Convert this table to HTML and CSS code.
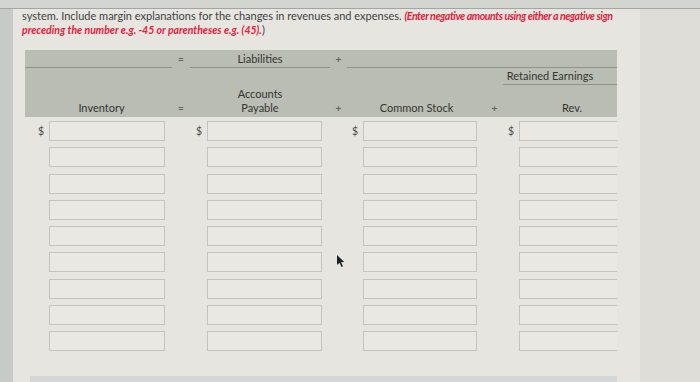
FILE: index.html
```html
<!DOCTYPE html>
<html>
<head>
<meta charset="utf-8">
<link rel="stylesheet" href="styles.css">
</head>
<body>
<div class="topband"></div>
<div class="screen">
  <div class="leftstrip"></div>
  <div class="panel">
    <p class="instr">system. Include margin explanations for the changes in revenues and expenses. <em class="red tight">(Enter negative amounts using either a negative sign</em><br><em class="red loose">preceding the number e.g. -45 or parentheses e.g. (45).</em>)</p>
    <div class="table">
      <div class="band">
        <div class="h r1 c1-2 ul"></div>
        <div class="h r1 c3 op">=</div>
        <div class="h r1 c4-5 ul">Liabilities</div>
        <div class="h r1 c6 op">+</div>
        <div class="h r1 c7-11 ul"></div>
        <div class="h r2 c10-11 ul re">Retained Earnings</div>
        <div class="h r3 c1-2 inv">Inventory</div>
        <div class="h r3 c3 op">=</div>
        <div class="h r3 c4-5">Accounts<br>Payable</div>
        <div class="h r3 c6 op">+</div>
        <div class="h r3 c7-8">Common Stock</div>
        <div class="h r3 c9 op">+</div>
        <div class="h r3 c10-11 rev">Rev.</div>
      </div>
      <div class="rows" id="rows"></div>
    </div>
    <div class="bottombar"></div>
  </div>
  <div class="rightarea"></div>
  <svg class="cursor" width="9" height="13" viewBox="0 0 9 13"><path d="M1 0 L1 10 L3.5 7.8 L5.5 12 L7 11.3 L5 7.2 L8.2 7 Z" fill="#1b1f2a"/></svg>
</div>
<script src="script.js"></script>
</body>
</html>
```
FILE: script.js
```js
var rows = document.getElementById('rows');
var html = '';
for (var r = 0; r < 9; r++) {
  var d = r === 0 ? '$' : '';
  html += '<div class="dol">' + d + '</div><div class="cell"><input class="box w1"></div><div></div>';
  html += '<div class="dol">' + d + '</div><div class="cell"><input class="box w2"></div><div></div>';
  html += '<div class="dol">' + d + '</div><div class="cell"><input class="box w3"></div><div></div>';
  html += '<div class="dol">' + d + '</div><div class="cell"><input class="box w4"></div>';
}
rows.innerHTML = html;
```
FILE: styles.css
```css
html, body {
  margin: 0;
  padding: 0;
}
body {
  width: 700px;
  height: 382px;
  overflow: hidden;
  background: #c9cbc6;
  font-family: Lato, "Open Sans", sans-serif;
}
.topband {
  height: 8px;
  background: #d3d5d1;
  border-bottom: 1px solid #a3a5a0;
}
.screen {
  position: relative;
  display: flex;
  height: 373px;
  overflow: hidden;
}
.leftstrip {
  width: 13px;
  background: #c8cac5;
  flex: none;
}
.panel {
  width: 604px;
  padding-left: 12px;
  background: #e6e5e0;
  flex: none;
  display: flex;
  flex-direction: column;
}
.rightarea {
  flex: 1;
  background: #dddcd6;
  border-left: 11px solid #e6e5e0;
}
.instr {
  margin: 0 0 0 -3px;
  font-size: 11px;
  line-height: 14px;
  color: #41423f;
  width: 620px;
  white-space: nowrap;
  flex: none;
}
.red {
  color: #e3223c;
  font-weight: 700;
  font-style: italic;
}
.tight {
  font-size: 10.6px;
  letter-spacing: -0.45px;
}
.loose {
  font-size: 10.5px;
  letter-spacing: 0;
}
.table {
  margin-top: 13px;
  width: 592px;
  overflow: hidden;
  flex: none;
}
.band, .rows {
  display: grid;
  grid-template-columns: 24px 123px 18px 17px 123px 17px 16px 123px 17px 16px 98px;
}
.band {
  background: #b9bdb3;
  grid-template-rows: 18px 17px 32px;
  color: #353632;
  font-size: 11px;
}
.h {
  text-align: center;
  line-height: 14px;
  box-sizing: border-box;
}
.r1 { grid-row: 1; padding-top: 2px; }
.r2 { grid-row: 2; padding-top: 1px; }
.r3 { grid-row: 3; align-self: end; padding-bottom: 2px; }
.c1-2 { grid-column: 1 / 3; }
.c3 { grid-column: 3; }
.c4-5 { grid-column: 4 / 6; }
.c6 { grid-column: 6; }
.c7-11 { grid-column: 7 / 12; }
.c7-8 { grid-column: 7 / 9; }
.c9 { grid-column: 9; }
.c10-11 { grid-column: 10 / 12; }
.ul { border-bottom: 1px solid #8f938b; }
.r1.ul { height: 18px; }
.r2.ul { height: 17px; }
.re { padding-right: 20px; }
.rev { padding-left: 24px; }
.inv { padding-left: 6px; }
.op {
  color: #62645f;
  font-size: 10px;
  font-weight: 700;
}
.rows {
  margin-top: 4px;
  row-gap: 6.3px;
  grid-auto-rows: 20px;
}
.dol {
  text-align: right;
  padding-right: 5px;
  font-size: 10.5px;
  line-height: 20px;
  color: #4a4b48;
}
.box {
  display: block;
  box-sizing: border-box;
  height: 20px;
  margin: 0;
  padding: 0;
  background: #e9e8e3;
  border: 1px solid #c3c4bf;
  border-radius: 0;
  outline: none;
}
.w1 { width: 116px; }
.w2 { width: 115px; }
.w3 { width: 114px; }
.w4 { width: 110px; }
.bottombar {
  margin-top: 25px;
  margin-left: 5px;
  width: 587px;
  height: 12px;
  flex: none;
  background: #d4d7d6;
}
.cursor {
  position: absolute;
  left: 336px;
  top: 246px;
}
```
